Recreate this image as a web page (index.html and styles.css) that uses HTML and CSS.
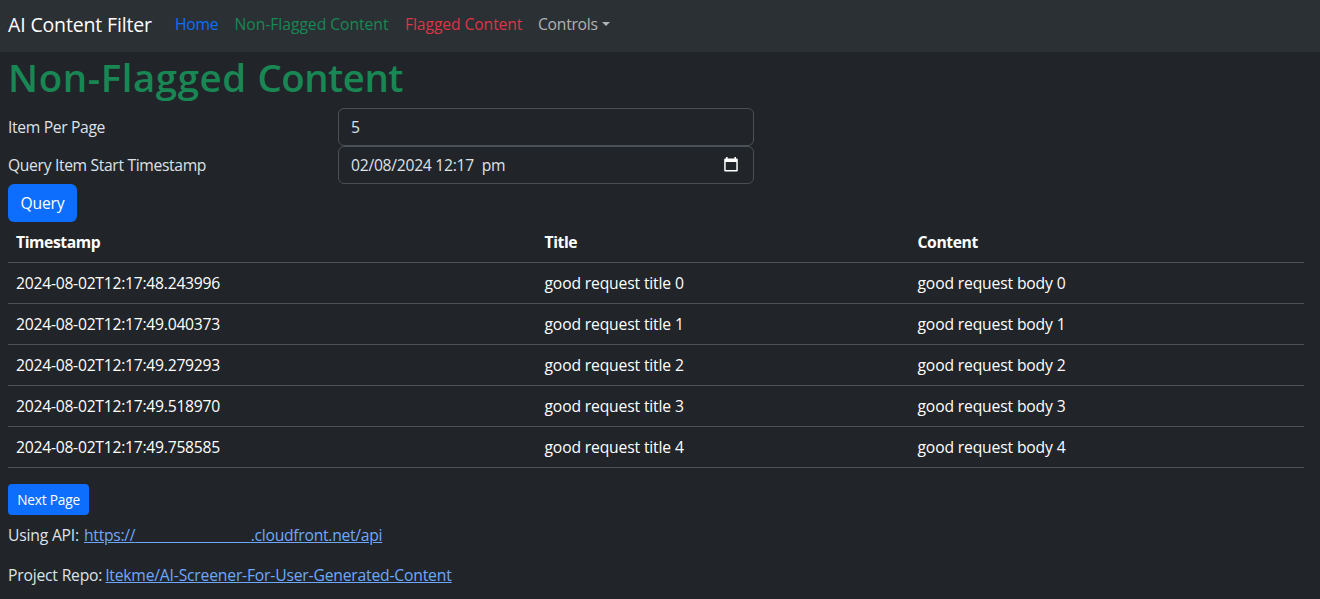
FILE: index.html
```html
<!DOCTYPE html>
<html lang="en">
<head>
<meta charset="utf-8">
<title>AI Content Filter</title>
<link rel="stylesheet" href="styles.css">
</head>
<body>
<nav class="navbar">
  <a class="brand">AI Content Filter</a>
  <a class="nav-link home">Home</a>
  <a class="nav-link success">Non-Flagged Content</a>
  <a class="nav-link danger">Flagged Content</a>
  <a class="nav-link controls">Controls<span class="caret"></span></a>
</nav>
<main class="page">
  <h1 class="title">Non-Flagged <span class="title-end">Content</span></h1>
  <div class="form-row"><label class="label">Item Per Page</label><div class="control">5</div></div>
  <div class="form-row"><label class="label">Query Item Start Timestamp</label>
    <div class="control"><span class="datetime">02/08/2024 12:17&nbsp; pm</span>
      <svg class="calendar" width="14" height="15" viewBox="0 0 14 15"><path fill="#fff" fill-rule="evenodd" d="M2 0h1.6v1.5h6.8V0H12v1.5h.8q1 0 1 1v11q0 1-1 1H1.2q-1 0-1-1v-11q0-1 1-1H2zM1.7 5v8h10.6V5z"/></svg>
    </div>
  </div>
  <button class="btn query">Query</button>
  <table class="table">
    <thead><tr><th class="col-time">Timestamp</th><th class="col-title">Title</th><th>Content</th></tr></thead>
    <tbody>
      <tr><td class="stamp">2024-08-02T12:17:48.243996</td><td>good request title 0</td><td>good request body 0</td></tr>
      <tr><td class="stamp">2024-08-02T12:17:49.040373</td><td>good request title 1</td><td>good request body 1</td></tr>
      <tr><td class="stamp">2024-08-02T12:17:49.279293</td><td>good request title 2</td><td>good request body 2</td></tr>
      <tr><td class="stamp">2024-08-02T12:17:49.518970</td><td>good request title 3</td><td>good request body 3</td></tr>
      <tr><td class="stamp">2024-08-02T12:17:49.758585</td><td>good request title 4</td><td>good request body 4</td></tr>
    </tbody>
  </table>
  <button class="btn next">Next Page</button>
  <p class="line"><span class="line-label">Using API:</span><a class="link api">https://<span class="host-gap">&nbsp;&nbsp;&nbsp;&nbsp;&nbsp;&nbsp;&nbsp;&nbsp;&nbsp;&nbsp;&nbsp;&nbsp;&nbsp;&nbsp;&nbsp;&nbsp;&nbsp;&nbsp;&nbsp;&nbsp;</span>.cloudfront.net/api</a></p>
  <p class="line"><span class="line-label repo-label">Project Repo:</span><a class="link repo">ltekme/AI-Screener-For-User-Generated-Content</a></p>
</main>
</body>
</html>
```
FILE: styles.css
```css
* { box-sizing: border-box; }
body {
  margin: 0;
  height: 599px;
  overflow: hidden;
  background: #212529;
  color: #dee2e6;
  font: 15.7px/24px "Segoe UI", "Open Sans", "Noto Sans", sans-serif;
  letter-spacing: -0.27px;
}
.navbar {
  display: flex;
  align-items: center;
  height: 52px;
  padding: 0 8px 3px;
  background: #2b3035;
  white-space: nowrap;
}
.brand { width: 159px; font-size: 19.5px; line-height: 30px; letter-spacing: -0.15px; color: #fff; }
.nav-link { padding: 0 8px 1px; }
.home { width: 59.5px; color: #0d6efd; }
.success { width: 170.5px; letter-spacing: -0.04px; color: #198754; }
.danger { width: 133px; letter-spacing: -0.1px; color: #dc3545; }
.controls { display: flex; align-items: center; color: #b0b2b4; }
.caret { margin-left: 4px; border: 4.5px solid transparent; border-top-color: currentColor; border-bottom: 0; }
.page { padding: 0 8px; }
.title { margin: 0 0 8px; font-size: 38.4px; line-height: 50px; height: 48px; font-weight: 600; letter-spacing: 0.6px; color: #198754; }
.title-end { letter-spacing: -0.5px; }
.form-row { display: grid; grid-template-columns: 330px 416px; align-items: center; height: 38px; }
.label { letter-spacing: -0.35px; }
.control {
  display: flex;
  align-items: center;
  justify-content: space-between;
  height: 38px;
  padding: 0 15px 0 12px;
  border: 1px solid #495057;
  border-radius: 6px;
}
.calendar { margin-top: -1px; }
.btn { display: block; padding: 0; border: 0; color: #fff; background: #0d6efd; font-family: inherit; white-space: nowrap; }
.query { width: 69px; height: 38px; border-radius: 6px; font-size: 15.7px; letter-spacing: -0.2px; }
.next { width: 81px; height: 31px; border-radius: 4px; font-size: 13.7px; letter-spacing: -0.2px; }
.table { width: 1296px; margin: 0 0 16px; border-collapse: separate; border-spacing: 0; table-layout: fixed; color: #fff; }
.table th, .table td { height: 41px; padding: 8px; border-bottom: 1px solid #4d5154; text-align: left; }
.table th { letter-spacing: -0.4px; }
.table td { letter-spacing: -0.16px; }
.table .stamp { letter-spacing: -0.25px; }
.col-time { width: 528.5px; }
.col-title { width: 373px; }
.line { display: flex; margin: 8px 0 16px; white-space: nowrap; }
.line-label { width: 76px; letter-spacing: -0.2px; }
.repo-label { width: 97.5px; }
.link { color: #6ea8fe; text-decoration: underline; }
.api { letter-spacing: -0.28px; }
.repo { letter-spacing: -0.19px; }
.host-gap { letter-spacing: 1.7px; }
```
